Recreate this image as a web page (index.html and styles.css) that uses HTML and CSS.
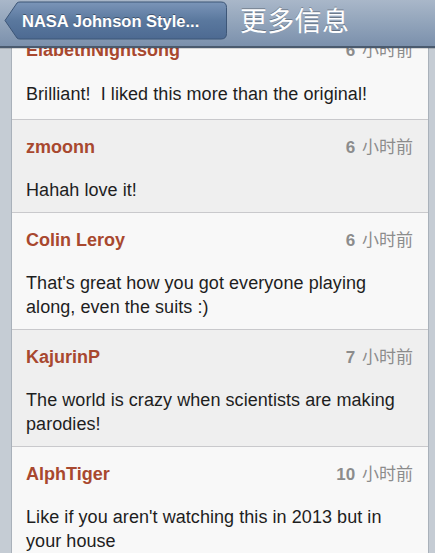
FILE: index.html
```html
<!DOCTYPE html>
<html lang="zh">
<head>
<meta charset="utf-8">
<link rel="stylesheet" href="styles.css">
</head>
<body>
<div class="screen">
  <header class="navbar">
    <div class="back">
      <svg class="back-shape" width="224" height="40" viewBox="0 0 224 40">
        <defs>
          <linearGradient id="bg" x1="0" y1="0" x2="0" y2="1">
            <stop offset="0" stop-color="#7b95b8"/>
            <stop offset="0.5" stop-color="#5a789e"/>
            <stop offset="1" stop-color="#4d6a92"/>
          </linearGradient>
        </defs>
        <path d="M1 19.5 L13 2 Q14 1 16 1 L217 1 Q222.5 1 222.5 6.5 L222.5 32.5 Q222.5 38 217 38 L16 38 Q14 38 13 37 Z" fill="url(#bg)" stroke="#3d5677" stroke-width="1"/>
      </svg>
      <span class="back-label">NASA Johnson Style...</span>
    </div>
    <h1 class="title">更多信息</h1>
  </header>
  <div class="viewport">
    <div class="gutter"></div>
    <ul class="list">
      <li class="row row-light first">
        <div class="meta"><span class="name">ElabethNightsong</span><span class="time"><b>6</b> 小时前</span></div>
        <p class="text">Brilliant!&nbsp; I liked this more than the original!</p>
      </li>
      <li class="row row-gray">
        <div class="meta"><span class="name">zmoonn</span><span class="time"><b>6</b> 小时前</span></div>
        <p class="text">Hahah love it!</p>
      </li>
      <li class="row row-light">
        <div class="meta"><span class="name">Colin Leroy</span><span class="time"><b>6</b> 小时前</span></div>
        <p class="text">That's great how you got everyone playing along, even the suits :)</p>
      </li>
      <li class="row row-gray">
        <div class="meta"><span class="name">KajurinP</span><span class="time"><b>7</b> 小时前</span></div>
        <p class="text">The world is crazy when scientists are making parodies!</p>
      </li>
      <li class="row row-light">
        <div class="meta"><span class="name">AlphTiger</span><span class="time"><b>10</b> 小时前</span></div>
        <p class="text">Like if you aren't watching this in 2013 but in your house</p>
      </li>
    </ul>
    <div class="gutter gutter-right"></div>
  </div>
</div>
</body>
</html>
```
FILE: styles.css
```css
html, body {
  margin: 0;
  padding: 0;
  background: #c7cdd4;
}
.screen {
  width: 435px;
  height: 553px;
  display: flex;
  flex-direction: column;
  overflow: hidden;
  font-family: "Liberation Sans", Arial, "Noto Sans CJK SC", sans-serif;
}
.navbar {
  position: relative;
  z-index: 2;
  height: 46px;
  flex: none;
  display: flex;
  align-items: flex-start;
  background: linear-gradient(#a9b7c9 0%, #94a6bc 45%, #7b90ac 100%);
  border-bottom: 2px solid #4a5a6e;
  box-shadow: 0 1px 0 rgba(0,0,0,0.15);
}
.back {
  position: relative;
  margin: 1px 0 0 4px;
  width: 224px;
  height: 40px;
  display: flex;
  align-items: center;
}
.back-shape {
  position: absolute;
  left: 0;
  top: 0;
}
.back-label {
  position: relative;
  padding-left: 18px;
  color: #fff;
  font-weight: bold;
  font-size: 16.5px;
  text-shadow: 0 -1px 0 rgba(0,0,0,0.35);
}
.title {
  margin: 2px 0 0 12px;
  font-family: "Noto Sans CJK SC", sans-serif;
  font-weight: 400;
  font-size: 27px;
  line-height: 36px;
  color: #fff;
  letter-spacing: 0.3px;
  text-shadow: 0 -1px 0 rgba(0,0,0,0.3);
}
.viewport {
  flex: 1;
  display: flex;
  overflow: hidden;
}
.gutter {
  width: 11px;
  flex: none;
  background: #c5ccd4;
  border-right: 1px solid #a9b1ba;
}
.gutter-right {
  width: 6px;
  border-right: none;
  border-left: 1px solid #a9b1ba;
}
.list {
  flex: 1;
  margin: 0;
  padding: 0;
  list-style: none;
  min-width: 0;
}
.row {
  padding: 16px 15px 10px 14px;
  border-bottom: 1px solid #c9c9cc;
}
.row.first {
  margin-top: -25px;
  padding-bottom: 13px;
}
.row.first .text {
  margin-top: 21px;
}
.row-light { background: #f8f8f8; }
.row-gray { background: #efefef; }
.meta {
  display: flex;
  justify-content: space-between;
  align-items: baseline;
  height: 22px;
  line-height: 22px;
}
.name {
  color: #a8482f;
  font-weight: bold;
  font-size: 18px;
}
.time {
  color: #8c8c8c;
  font-size: 17px;
  font-family: "Liberation Sans", "Noto Sans CJK SC", sans-serif;
}
.time b { font-weight: bold; margin-right: 2px; }
.text {
  margin: 20px 0 0 0;
  font-size: 18px;
  line-height: 24px;
  letter-spacing: 0.06px;
  color: #1e1e1e;
}
```
